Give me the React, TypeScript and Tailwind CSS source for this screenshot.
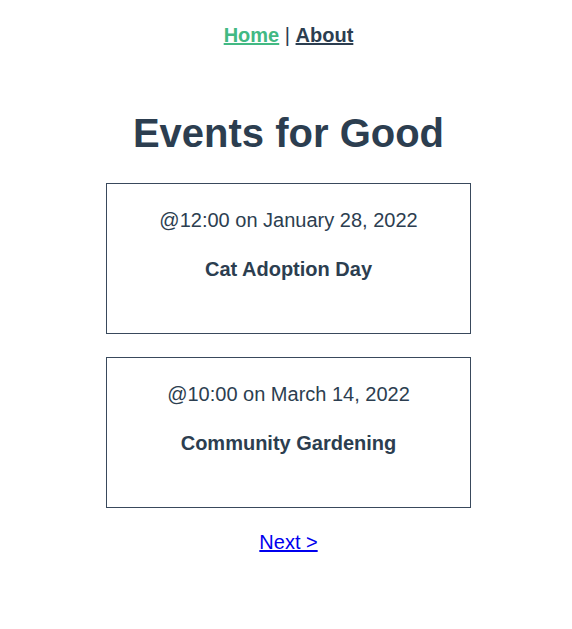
export default function App() {
  const events = [
    { time: "@12:00 on January 28, 2022", title: "Cat Adoption Day" },
    { time: "@10:00 on March 14, 2022", title: "Community Gardening" },
  ];
  return (
    <div className="min-h-[629px] bg-white pl-[5px] text-center text-[20px] text-[#2c3e50]" style={{ fontFamily: '"Liberation Sans", Arial, sans-serif' }}>
      <nav className="pt-[20px] pb-[33px] font-bold">
        <a href="#" className="text-[#42b983] underline">Home</a>
        <span className="font-normal"> | </span>
        <a href="#" className="text-[#2c3e50] underline">About</a>
      </nav>
      <h1 className="mt-[27px] mb-[27px] text-[40px] font-bold leading-[46px]">Events for Good</h1>
      <div className="flex flex-col items-center">
        {events.map((e) => (
          <div key={e.title} className="mb-[23px] w-[365px] border border-[#39495c] px-[20px] pt-[25px] pb-[23px] h-[151px]">
            <div className="leading-[23px]">{e.time}</div>
            <h4 className="mt-[26px] text-[20px] font-bold leading-[23px]">{e.title}</h4>
          </div>
        ))}
        <a href="#" className="mt-[0px] text-[#0000ee] underline leading-[23px]">Next &gt;</a>
      </div>
    </div>
  );
}
